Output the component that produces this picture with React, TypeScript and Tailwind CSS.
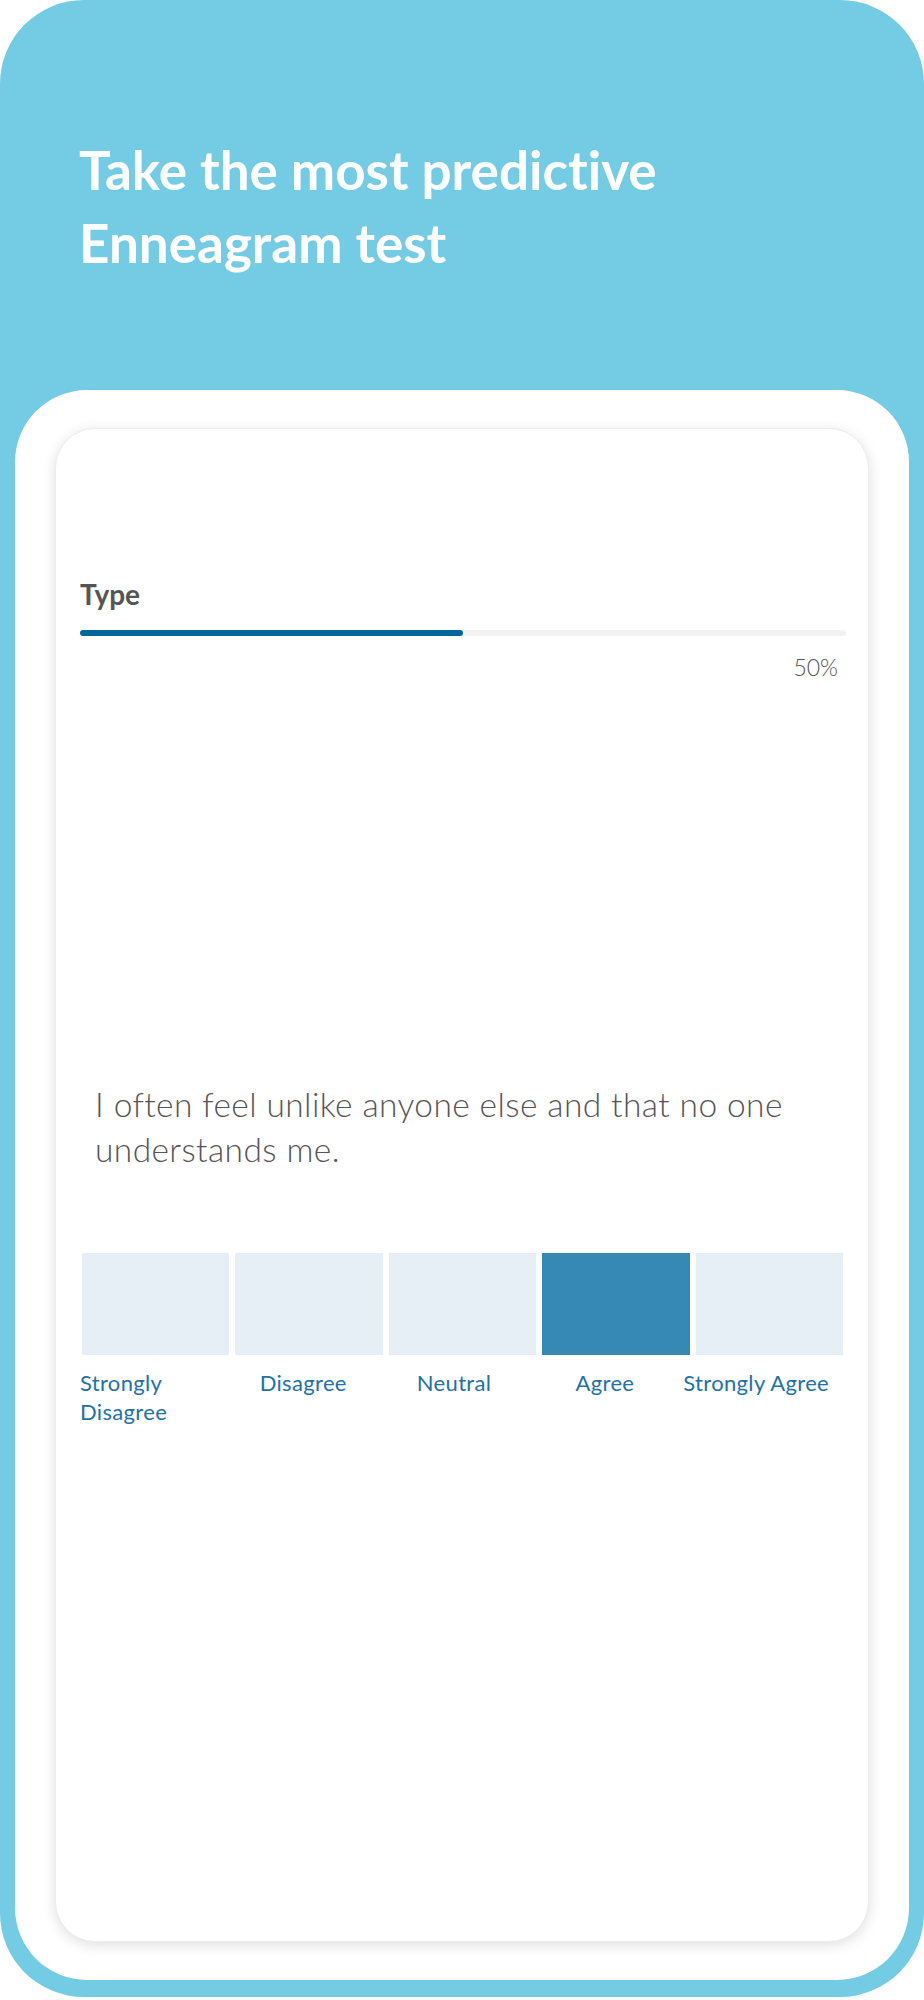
const OPTIONS = ['Strongly Disagree', 'Disagree', 'Neutral', 'Agree', 'Strongly Agree']
const SELECTED = 3

export default function App() {
  const progress = 50

  return (
    <div className="w-[924px] h-[2000px] bg-white font-['Lato',sans-serif] [font-variant-ligatures:none]">
      <div className="w-[924px] h-[1997px] bg-[#74cbe4] rounded-[84px] px-[15px] flex flex-col">
        <div className="pt-[133px] pl-[64px] h-[390px]">
          <h1 className="text-white font-bold text-[53px] leading-[73px]">
            Take the most predictive
            <br />
            Enneagram test
          </h1>
        </div>

        <div className="bg-white rounded-[72px] h-[1590px] pt-[38px] pl-[40px] pr-[40px]">
          <div className="h-[1514px] bg-white rounded-[40px] border border-[#ececec] shadow-[0_3px_14px_rgba(0,0,0,0.13)] pl-[24px] pr-[22px] pt-[148px]">
            <p className="text-[#555555] font-bold text-[28px] leading-[34px]">Type</p>

            <div className="mt-[19px] h-[6px] rounded-full bg-[#f2f2f2]">
              <div className="h-full rounded-full bg-[#03679b]" style={{ width: `${progress}%` }} />
            </div>

            <p className="mt-[18px] text-right pr-[8px] text-[#555555] font-light text-[23px] leading-[26px]">
              {progress}%
            </p>

            <p className="mt-[402px] ml-[15px] pr-[8px] text-[#555555] font-light text-[33.5px] leading-[45px] tracking-[0.012em]">
              I often feel unlike anyone else and that no one understands me.
            </p>

            <div className="mt-[81px] ml-[2px] w-[761px] flex gap-[6px]">
              {OPTIONS.map((o, i) => (
                <div
                  key={o}
                  className={i === SELECTED ? 'h-[102px] flex-1 bg-[#3689b4]' : 'h-[102px] flex-1 bg-[#e6eff5]'}
                />
              ))}
            </div>

            <div className="mt-[13px] ml-[2px] w-[761px] flex gap-[6px] text-[#2272a6] text-[22px] leading-[29px] tracking-[0.015em]">
              <div className="flex-1 -ml-[2px] text-left">Strongly<br />Disagree</div>
              <div className="flex-1 flex justify-center"><span className="whitespace-nowrap">Disagree</span></div>
              <div className="flex-1 flex justify-center"><span className="whitespace-nowrap">Neutral</span></div>
              <div className="flex-1 flex justify-center"><span className="whitespace-nowrap">Agree</span></div>
              <div className="flex-1 flex justify-center pr-[14px]"><span className="whitespace-nowrap">Strongly Agree</span></div>
            </div>
          </div>
        </div>
      </div>
    </div>
  )
}
